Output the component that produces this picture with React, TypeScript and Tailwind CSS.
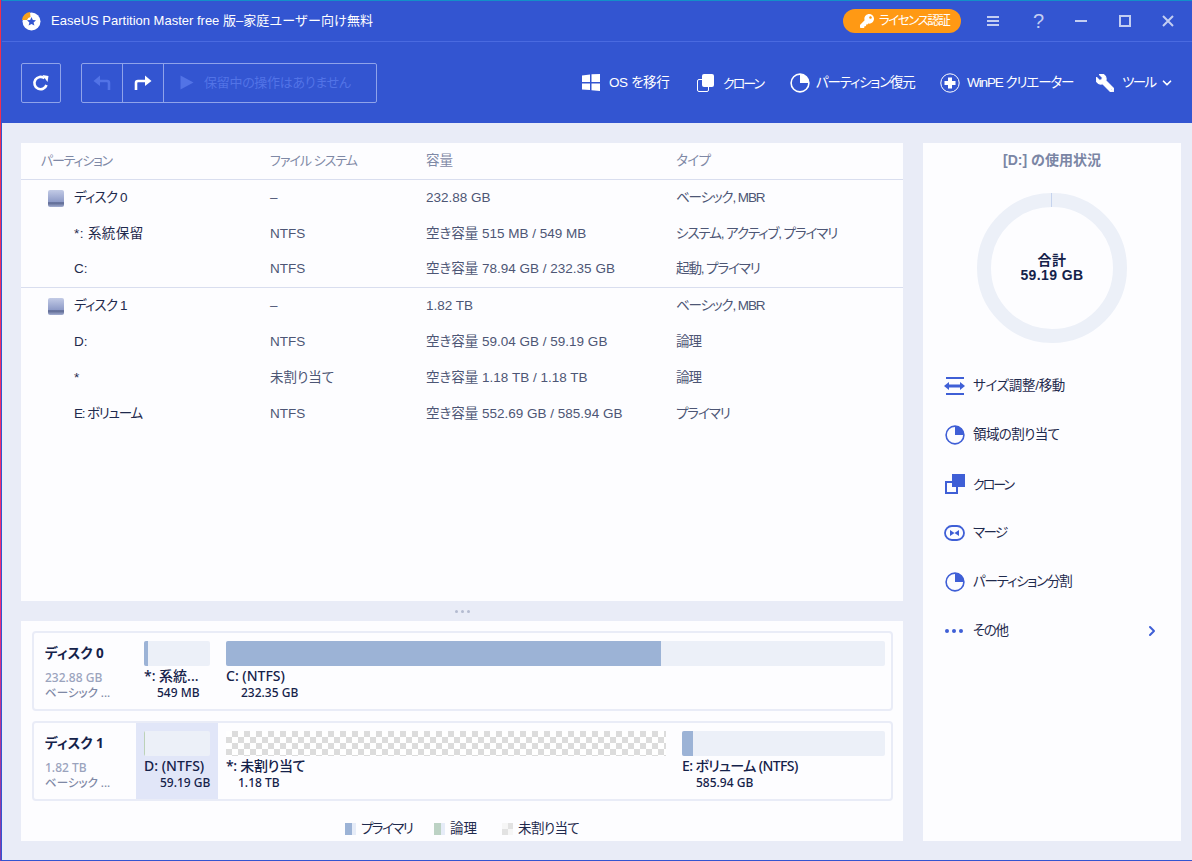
import { ChevronDown, ChevronRight } from 'lucide-react'
import { FaKey, FaWrench } from 'react-icons/fa'

const FONT = 'font-["Liberation_Sans","Noto_Sans_CJK_JP",sans-serif]'
const DISK_FONT = 'font-["Noto_Sans","Noto_Sans_CJK_JP",sans-serif]'

type Row = { name: string; nameClass?: string; fs: string; size: string; type: string; disk?: boolean }

const rows: Row[] = [
  { name: 'ディスク 0', nameClass: 'tracking-[-0.8px]', fs: '–', size: '232.88 GB', type: 'ベーシック, MBR', disk: true },
  { name: '*: 系統保留', nameClass: 'tracking-[0.4px]', fs: 'NTFS', size: '空き容量 515 MB / 549 MB', type: 'システム, アクティブ, プライマリ' },
  { name: 'C:', fs: 'NTFS', size: '空き容量 78.94 GB / 232.35 GB', type: '起動, プライマリ' },
  { name: 'ディスク 1', nameClass: 'tracking-[-0.8px]', fs: '–', size: '1.82 TB', type: 'ベーシック, MBR', disk: true },
  { name: 'D:', fs: 'NTFS', size: '空き容量 59.04 GB / 59.19 GB', type: '論理' },
  { name: '*', fs: '未割り当て', size: '空き容量 1.18 TB / 1.18 TB', type: '論理' },
  { name: 'E: ボリューム', nameClass: 'tracking-[-1.2px]', fs: 'NTFS', size: '空き容量 552.69 GB / 585.94 GB', type: 'プライマリ' }
]

function Logo() {
  return (
    <svg width="20" height="20" viewBox="0 0 20 20">
      <circle cx="10.5" cy="10.5" r="9" fill="#fff" />
      <path d="M1 9 A9 9 0 0 1 9 1 L9.5 6 A4.5 4.5 0 0 0 6 9 Z" fill="#f7a11c" />
      <path d="M10.5 6 L11.8 9 L15 9.3 L12.6 11.4 L13.4 14.6 L10.5 12.9 L7.6 14.6 L8.4 11.4 L6 9.3 L9.2 9 Z" fill="#3355d1" />
    </svg>
  )
}

function PieIcon({ color, size = 20, fill }: { color: string; size?: number; fill: string }) {
  return (
    <svg width={size} height={size} viewBox="0 0 20 20">
      <circle cx="10" cy="10" r="8.9" fill="none" stroke={color} strokeWidth="1.6" />
      <path d="M10 1 A9 9 0 0 1 19 10 L10 10 Z" fill={fill} />
    </svg>
  )
}

function ToolItem({
  icon,
  label,
  className,
  labelClass
}: {
  icon: React.ReactNode
  label: string
  className: string
  labelClass: string
}) {
  return (
    <div className={`flex items-center whitespace-nowrap text-[13.5px] text-white ${className}`}>
      {icon}
      <span className={`pt-[2px] ${labelClass}`}>{label}</span>
    </div>
  )
}

function TitleBar() {
  return (
    <div className="flex h-[41px] items-center border-b border-[#4a6ae0] pl-[19px]">
      <Logo />
      <span className="ml-[10px] text-[13px] text-white [font-feature-settings:normal]">
        EaseUS Partition Master free 版–家庭ユーザー向け無料
      </span>
      <div className="ml-auto flex h-6 w-[118px] items-center gap-[5px] rounded-full bg-[#ff9914] pl-[17px] text-[12.5px] tracking-[-1.5px] text-white">
        <FaKey size={14} />
        <span className="whitespace-nowrap">ライセンス認証</span>
      </div>
      <div className="ml-[26px] flex flex-col gap-[2px]">
        <div className="h-[2px] w-[12px] bg-[#c3cef2]" />
        <div className="h-[2px] w-[12px] bg-[#c3cef2]" />
        <div className="h-[2px] w-[12px] bg-[#c3cef2]" />
      </div>
      <span className="ml-[34px] w-[12px] text-[20px] leading-none text-[#c3cef2]">?</span>
      <div className="ml-[30px] h-[2px] w-[12px] bg-[#c3cef2]" />
      <div className="ml-[32px] h-[12px] w-[12px] border-2 border-[#c3cef2]" />
      <svg className="ml-[31px] mr-[18px]" width="12" height="12" viewBox="0 0 12 12">
        <path d="M1 1 L11 11 M11 1 L1 11" stroke="#c3cef2" strokeWidth="2" />
      </svg>
    </div>
  )
}

function Toolbar() {
  return (
    <div className="flex h-[81px] items-center pl-[19px]">
      <div className="flex h-10 w-10 items-center justify-center rounded-[2px] border border-[#8fa3ea]">
        <svg width="18" height="18" viewBox="0 0 18 18" fill="none">
          <path d="M14.5 11 A6.2 6.2 0 1 1 12.5 4.2" stroke="#fff" strokeWidth="2.6" />
          <path d="M10.5 1 L16.5 2 L15.5 8 Z" fill="#fff" />
        </svg>
      </div>
      <div className="ml-5 flex h-10 w-[296px] rounded-[2px] border border-[#8fa3ea]">
        <div className="flex w-[41px] items-center justify-center border-r border-[#8fa3ea]">
          <svg width="18" height="16" viewBox="0 0 18 16" fill="none">
            <path d="M16 15 V8 Q16 6 14 6 H5" stroke="#5273e6" strokeWidth="2.6" />
            <path d="M7 0.5 V11 L0.5 6 Z" fill="#5273e6" />
          </svg>
        </div>
        <div className="flex w-[41px] items-center justify-center border-r border-[#8fa3ea]">
          <svg width="18" height="16" viewBox="0 0 18 16" fill="none">
            <path d="M2 15 V8 Q2 6 4 6 H13" stroke="#fff" strokeWidth="2.6" />
            <path d="M11 0.5 V11 L17.5 6 Z" fill="#fff" />
          </svg>
        </div>
        <div className="flex items-center pl-4 text-[13px] tracking-[-0.3px] text-[#5273e6]">
          <svg width="14" height="15" viewBox="0 0 14 15">
            <path d="M0.5 0.5 L13.5 7.5 L0.5 14.5 Z" fill="#5273e6" />
          </svg>
          <span className="ml-[10px]">保留中の操作はありません</span>
        </div>
      </div>
      <div className="ml-auto flex items-center pr-[18px]">
        <ToolItem
          className="w-[115px]"
          labelClass="tracking-[-0.4px]"
          label="OS を移行"
          icon={
            <svg className="mr-[9px]" width="18" height="17" viewBox="0 0 18 17" fill="#fff">
              <path d="M0 1.5 L8 0.5 V8 H0 Z M9.5 0.3 L18 0 V8 H9.5 Z M0 9.5 H8 V16 L0 15.5 Z M9.5 9.5 H18 V17 L9.5 16.3 Z" />
            </svg>
          }
        />
        <ToolItem
          className="w-[93px]"
          labelClass="text-[13px] tracking-[-2px]"
          label="クローン"
          icon={
            <svg className="mr-[9px]" width="17" height="18" viewBox="0 0 17 18">
              <rect x="0.5" y="5.5" width="11" height="12" rx="1.5" fill="none" stroke="#fff" />
              <rect x="5" y="0" width="12" height="13" rx="2" fill="#fff" />
            </svg>
          }
        />
        <ToolItem
          className="w-[150px]"
          labelClass="tracking-[-1.2px]"
          label="パーティション復元"
          icon={
            <span className="mr-[6px] flex">
              <PieIcon color="#fff" fill="#fff" />
            </span>
          }
        />
        <ToolItem
          className="w-[156px]"
          labelClass="tracking-[-1.1px]"
          label="WinPE クリエーター"
          icon={
            <svg className="mr-[7px]" width="20" height="20" viewBox="0 0 20 20">
              <circle cx="10" cy="10" r="9.2" fill="none" stroke="#fff" />
              <path d="M8 4.5 H12 V8 H15.5 V12 H12 V15.5 H8 V12 H4.5 V8 H8 Z" fill="#fff" />
            </svg>
          }
        />
        <ToolItem
          className="w-[64px]"
          labelClass="tracking-[-1.6px]"
          label="ツール"
          icon={<FaWrench size={18} className="mr-2 -scale-x-100 stroke-white stroke-[30]" />}
        />
        <ChevronDown size={14} strokeWidth={3} className="text-white" />
      </div>
    </div>
  )
}

function PartitionTable() {
  return (
    <div className="h-[458px] bg-[#fdfdff] text-[13.5px] text-[#1f2a4d]">
      <div className="flex h-[37px] items-center border-b border-[#d9deef] pl-5 text-[#7f89a6]">
        <span className="w-[229px] text-[13px] tracking-[-1.2px]">パーティション</span>
        <span className="w-[156px] text-[13px] tracking-[-1px]">ファイル システム</span>
        <span className="w-[250px]">容量</span>
        <span className="tracking-[-0.6px]">タイプ</span>
      </div>
      {rows.map((r, i) => (
        <div
          key={r.name}
          className={`flex h-9 items-center pl-5 ${i === 2 ? 'border-b border-[#d9deef]' : ''}`}
        >
          <div className="flex w-[229px] items-center pl-[33px]">
            {r.disk && (
              <div className="-ml-[26px] mr-[10px] h-[17px] w-4 rounded-[2px] bg-[linear-gradient(#c3cbe6,#8d9ac7_70%,#59658f_75%,#a3aed2)]" />
            )}
            <span className={r.nameClass}>{r.name}</span>
          </div>
          <span className="w-[156px] text-[#4d5675]">{r.fs}</span>
          <span className="w-[250px] text-[#4d5675]">{r.size}</span>
          <span className="tracking-[-1.1px] text-[#4d5675]">{r.type}</span>
        </div>
      ))}
    </div>
  )
}

function Bar({ fill, color }: { fill: string; color: string }) {
  return (
    <div className="h-[25px] overflow-hidden rounded-[2px] bg-[#ecf0f8]">
      <div className={`h-full ${fill} ${color}`} />
    </div>
  )
}

function Label({
  name,
  size,
  indent,
  nameClass = ''
}: {
  name: string
  size: string
  indent: string
  nameClass?: string
}) {
  return (
    <div className="mt-px text-[#15224a]">
      <div className={`whitespace-nowrap text-[14px] font-medium leading-[18px] ${nameClass}`}>{name}</div>
      <div className={`whitespace-nowrap text-[12px] font-medium leading-[15px] ${indent}`}>{size}</div>
    </div>
  )
}

function DiskInfo({ name, size }: { name: string; size: string }) {
  return (
    <div className="w-[102px] shrink-0 pl-[11px] pt-[9px]">
      <div className="text-[13.5px] font-bold leading-[22px] text-[#15224a]">{name}</div>
      <div className="mt-[6px] text-[12px] font-medium leading-[15px] text-[#9aa3bd]">{size}</div>
      <div className="text-[11.5px] font-medium leading-[15px] text-[#7f89a6]">ベーシック ...</div>
    </div>
  )
}

function DiskMap() {
  return (
    <div className={`flex h-[220px] flex-col bg-[#fdfdff] pl-[11px] pr-[10px] pt-[10px] ${DISK_FONT}`}>
      <div className="flex h-20 rounded-[4px] border-2 border-[#e9ecf7]">
        <DiskInfo name="ディスク 0" size="232.88 GB" />
        <div className="w-[82px] shrink-0 px-2 pt-2">
          <Bar fill="w-1" color="bg-[#9cb3d6]" />
          <Label name="*: 系統..." size="549 MB" indent="pl-[13px]" />
        </div>
        <div className="flex-1 pl-2 pr-[6px] pt-2">
          <Bar fill="w-[435px]" color="bg-[#9cb3d6]" />
          <Label name="C: (NTFS)" size="232.35 GB" indent="pl-[15px]" />
        </div>
      </div>
      <div className="mt-[10px] flex h-20 rounded-[4px] border-2 border-[#e9ecf7]">
        <DiskInfo name="ディスク 1" size="1.82 TB" />
        <div className="w-[82px] shrink-0 bg-[#e1e6f8] px-2 pt-2">
          <Bar fill="w-px" color="bg-[#bcd2b8]" />
          <Label name="D: (NTFS)" size="59.19 GB" indent="pl-4" />
        </div>
        <div className="w-[456px] shrink-0 px-2 pt-2">
          <div className="h-[25px] bg-[repeating-conic-gradient(#dcdcdc_0_25%,#ffffff_0_50%)] bg-[length:12px_12px]" />
          <Label name="*: 未割り当て" size="1.18 TB" indent="pl-3" nameClass="tracking-[-0.3px]" />
        </div>
        <div className="flex-1 pl-2 pr-[6px] pt-2">
          <Bar fill="w-[11px]" color="bg-[#9cb3d6]" />
          <Label name="E: ボリューム (NTFS)" size="585.94 GB" indent="pl-[14px]" nameClass="tracking-[-0.6px]" />
        </div>
      </div>
      <div className={`mt-[18px] flex items-center pl-[313px] text-[13.5px] text-[#1f2a4d] ${FONT}`}>
        <div className="h-3 w-[11px] border-r-[4px] border-[#e6ecf8] bg-[#9cb3d6]" />
        <span className="ml-[5px] w-[52px] whitespace-nowrap tracking-[-1.6px]">プライマリ</span>
        <div className="ml-[21px] h-3 w-[11px] border-r-[4px] border-[#e6ecf8] bg-[#bcd2c4]" />
        <span className="ml-[5px] w-[29px] whitespace-nowrap">論理</span>
        <div className="ml-[23px] h-3 w-[11px] bg-[repeating-conic-gradient(#e2e2e2_0_25%,#f6f6f6_0_50%)] bg-[length:12px_12px]" />
        <span className="ml-[5px] whitespace-nowrap tracking-[-0.6px]">未割り当て</span>
      </div>
    </div>
  )
}

function ActionRow({
  icon,
  label,
  labelClass,
  arrow
}: {
  icon: React.ReactNode
  label: string
  labelClass: string
  arrow?: boolean
}) {
  return (
    <div className="flex h-[49px] items-center pl-[22px] pr-[21px] text-[13.5px] text-[#1f2a4d]">
      <div className="flex w-[28px] shrink-0">{icon}</div>
      <span className={`pt-[2px] ${labelClass}`}>{label}</span>
      {arrow && <ChevronRight size={16} strokeWidth={3} className="ml-auto text-[#3f5fd6]" />}
    </div>
  )
}

function SidePanel() {
  const blue = '#3f5fd6'
  return (
    <div className="flex w-[258px] flex-col bg-[#fdfdff]">
      <div className="mt-[7px] text-center text-[14px] font-bold leading-[20px] text-[#7b86a5]">[D:] の使用状況</div>
      <div className="relative mx-auto mt-[23px] flex h-[150px] w-[150px] items-center justify-center rounded-full border-[14px] border-[#ecf0f8]">
        <div className="absolute -top-[14px] left-[60px] h-[14px] w-px bg-[#c5d3ee]" />
        <div className="text-center text-[14px] font-bold leading-[15px] tracking-[0.4px] text-[#15224a]">
          <div>合計</div>
          <div>59.19 GB</div>
        </div>
      </div>
      <div className="mt-[18px]">
        <ActionRow
          label="サイズ調整/移動"
          labelClass="tracking-[-0.3px]"
          icon={
            <svg className="-ml-px" width="21" height="18" viewBox="0 0 21 18" fill={blue}>
              <path d="M2 0 H20 V2 H2 Z M2 16 H20 V18 H2 Z M0 9 L5 5 V7.5 H16 V5 L21 9 L16 13 V10.5 H5 V13 Z" />
            </svg>
          }
        />
        <ActionRow label="領域の割り当て" labelClass="tracking-[-0.6px]" icon={<PieIcon color={blue} fill={blue} />} />
        <ActionRow
          label="クローン"
          labelClass="text-[13px] tracking-[-2px]"
          icon={
            <svg width="20" height="20" viewBox="0 0 20 20">
              <rect x="1" y="8" width="11" height="11" fill="none" stroke={blue} strokeWidth="2" />
              <rect x="7" y="0" width="13" height="13" fill={blue} />
            </svg>
          }
        />
        <ActionRow
          label="マージ"
          labelClass="tracking-[-1.6px]"
          icon={
            <svg className="-ml-px" width="21" height="16" viewBox="0 0 21 16" fill="none">
              <rect x="1" y="1" width="19" height="14" rx="7" stroke={blue} strokeWidth="1.8" />
              <path d="M6 5 L10.5 8 L6 11 Z M15 5 L10.5 8 L15 11 Z" fill={blue} />
            </svg>
          }
        />
        <ActionRow label="パーティション分割" labelClass="tracking-[-1.2px]" icon={<PieIcon color={blue} fill={blue} />} />
        <ActionRow
          label="その他"
          labelClass="tracking-[-1.4px]"
          arrow
          icon={
            <div className="flex gap-[3px]">
              <div className="h-1 w-1 rounded-full bg-[#3f5fd6]" />
              <div className="h-1 w-1 rounded-full bg-[#3f5fd6]" />
              <div className="h-1 w-1 rounded-full bg-[#3f5fd6]" />
            </div>
          }
        />
      </div>
    </div>
  )
}

export default function App() {
  return (
    <div className={`flex h-[861px] w-[1192px] overflow-hidden [font-feature-settings:"palt"] ${FONT}`}>
      <div className="w-px bg-[linear-gradient(#f0304a,#f0307a_70%,#7a3fb0)]" />
      <div className="flex flex-1 flex-col border-b border-l border-[#3355d1]">
        <div className="h-px bg-[#1290c8]" />
        <div className="bg-[#3355d1]">
          <TitleBar />
          <Toolbar />
        </div>
        <div className="flex flex-1 bg-[#e9ecf7] pb-[19px] pl-[19px] pr-[11px] pt-5">
          <div className="flex w-[882px] flex-col">
            <PartitionTable />
            <div className="flex h-5 items-center justify-center gap-[3px]">
              <div className="h-[3px] w-[3px] rounded-full bg-[#b4bbd0]" />
              <div className="h-[3px] w-[3px] rounded-full bg-[#b4bbd0]" />
              <div className="h-[3px] w-[3px] rounded-full bg-[#b4bbd0]" />
            </div>
            <DiskMap />
          </div>
          <div className="ml-5 flex">
            <SidePanel />
          </div>
        </div>
      </div>
    </div>
  )
}
